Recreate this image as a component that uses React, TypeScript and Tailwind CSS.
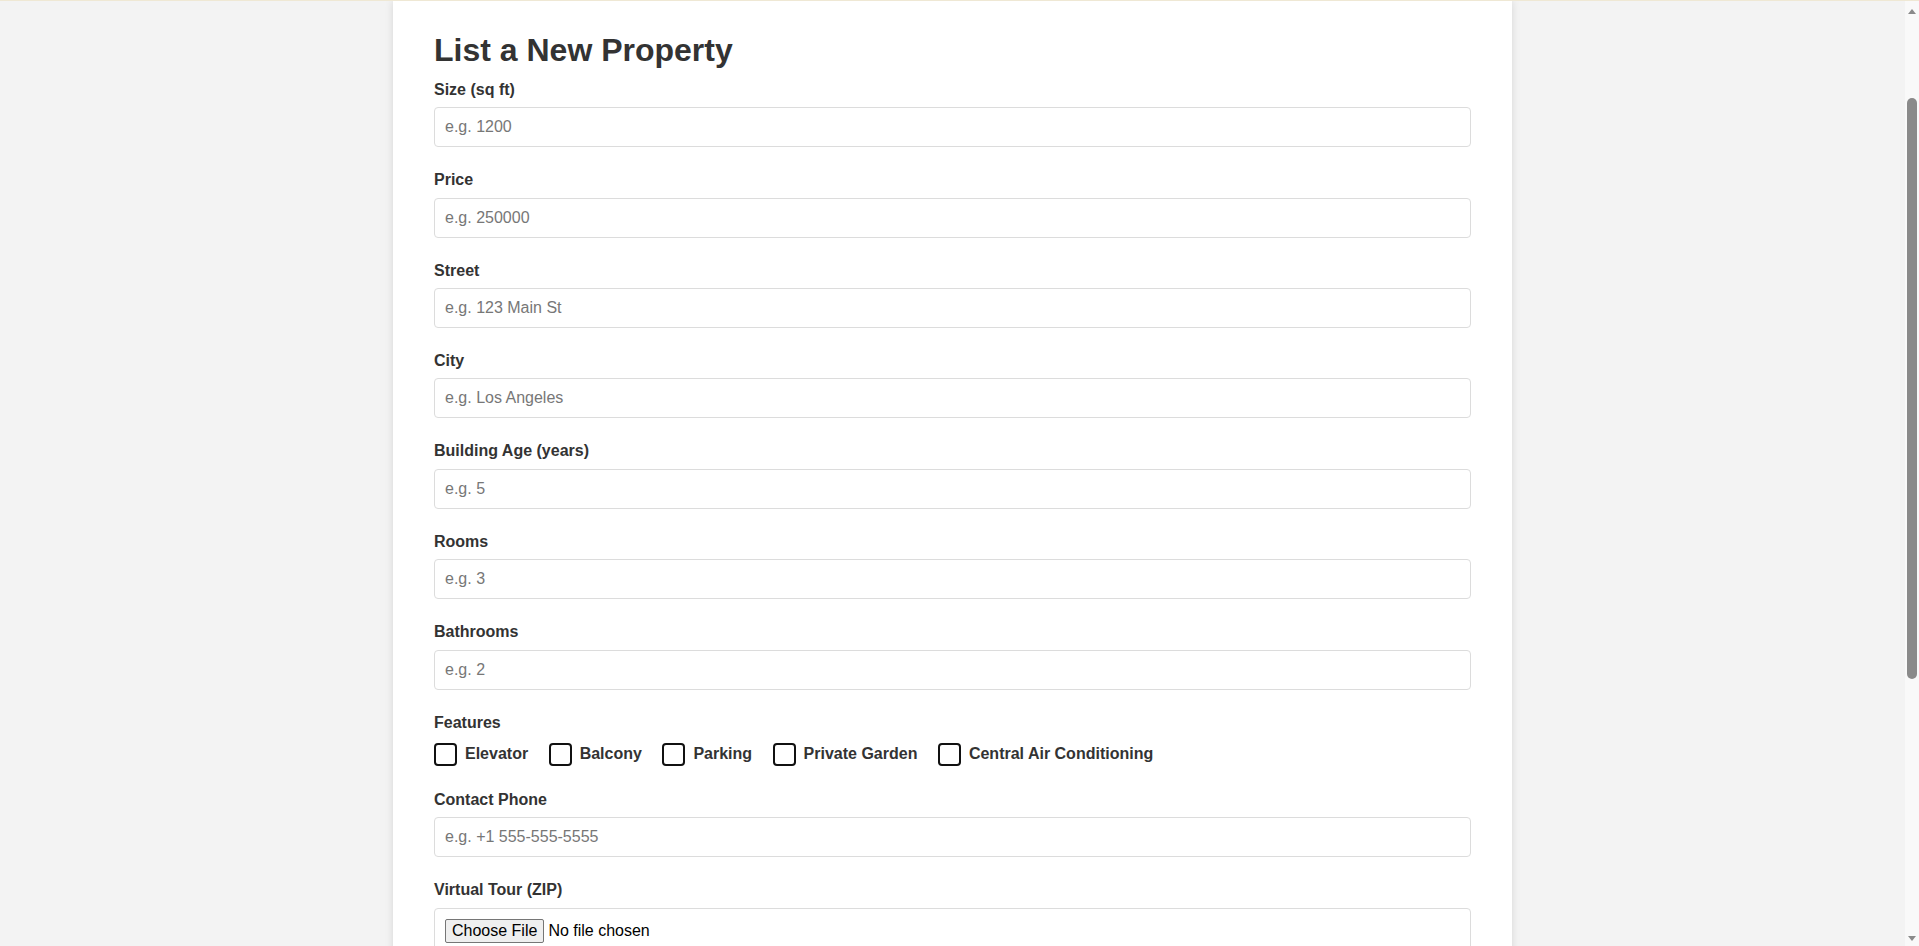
import { useState } from 'react';

const textFields = [
  { name: 'size', label: 'Size (sq ft)', placeholder: 'e.g. 1200' },
  { name: 'price', label: 'Price', placeholder: 'e.g. 250000' },
  { name: 'street', label: 'Street', placeholder: 'e.g. 123 Main St' },
  { name: 'city', label: 'City', placeholder: 'e.g. Los Angeles' },
  { name: 'age', label: 'Building Age (years)', placeholder: 'e.g. 5' },
  { name: 'rooms', label: 'Rooms', placeholder: 'e.g. 3' },
  { name: 'bathrooms', label: 'Bathrooms', placeholder: 'e.g. 2' },
];

const features = ['Elevator', 'Balcony', 'Parking', 'Private Garden', 'Central Air Conditioning'];

const inputClass =
  'block w-full h-[40px] px-[10px] border border-[#dcdcdc] rounded-[4px] bg-white text-[16px] leading-[18.4px] text-[#333] placeholder:text-[#777] outline-none focus:border-[#999]';
const labelClass = 'block mb-2 text-[16px] leading-[18.4px] font-bold text-[#333]';
const fileClass =
  'block w-full p-[10px] border border-[#dcdcdc] rounded-[4px] text-[16px] leading-[18.4px] text-black file:mr-[4px] file:px-[6px] file:py-[2px] file:border file:border-[#767676] file:rounded-[2px] file:bg-[#efefef] file:text-black';

// fake window scrollbar, the page in the shot is scrolled a bit
function Scrollbar() {
  return (
    <div className="w-[14px] shrink-0 h-full bg-[#f9f9f9] flex flex-col items-center">
      <svg width="8" height="5" viewBox="0 0 8 5" className="mt-[8px]">
        <path d="M0 5 L4 0 L8 5 Z" fill="#8a8a8a" />
      </svg>
      <div className="mt-[84px] w-[10px] h-[581px] rounded-[5px] bg-[#8a8a8a]" />
      <svg width="8" height="5" viewBox="0 0 8 5" className="mt-auto mb-[5px]">
        <path d="M0 0 L8 0 L4 5 Z" fill="#8a8a8a" />
      </svg>
    </div>
  );
}

export default function App() {
  const [checked, setChecked] = useState<string[]>([]);

  const toggle = (f: string) =>
    setChecked((prev) => (prev.includes(f) ? prev.filter((x) => x !== f) : [...prev, f]));

  return (
    <div className="flex h-screen overflow-hidden border-t border-[#efe8d4] bg-[#f3f3f3] font-['Liberation_Sans',Arial,sans-serif]">
      <div className="flex-1 min-w-0 h-full overflow-hidden">
        <div className="mx-auto w-[1119px] bg-white px-[41px] pt-[31px] pb-[40px] shadow-[0_0_8px_rgba(0,0,0,0.12)]">
          <h1 className="mb-3 text-[32px] leading-[36.8px] font-bold text-[#333]">List a New Property</h1>

          <form onSubmit={(e) => e.preventDefault()}>
            {textFields.map((f) => (
              <div key={f.name} className="mb-6">
                <label htmlFor={f.name} className={labelClass}>{f.label}</label>
                <input id={f.name} type="text" placeholder={f.placeholder} className={inputClass} />
              </div>
            ))}

            <div className="mb-[23px]">
              <span className={labelClass}>Features</span>
              <div className="flex h-[28px] items-center gap-[20.5px]">
                {features.map((f) => (
                  <label key={f} className="flex items-center gap-2 cursor-pointer">
                    <input
                      type="checkbox"
                      checked={checked.includes(f)}
                      onChange={() => toggle(f)}
                      className="appearance-none w-[23px] h-[23px] border-2 border-[#111] rounded-[4px] bg-white checked:bg-[#333]"
                    />
                    <span className="text-[16px] leading-[18.4px] font-bold text-[#333]">{f}</span>
                  </label>
                ))}
              </div>
            </div>

            <div className="mb-6">
              <label htmlFor="phone" className={labelClass}>Contact Phone</label>
              <input id="phone" type="tel" placeholder="e.g. +1 555-555-5555" className={inputClass} />
            </div>

            <div className="mb-6">
              <label htmlFor="tour" className={labelClass}>Virtual Tour (ZIP)</label>
              <input id="tour" type="file" accept=".zip" className={fileClass} />
            </div>

            <div className="mb-6">
              <label htmlFor="photos" className={labelClass}>Photos</label>
              <input id="photos" type="file" multiple className={fileClass} />
            </div>

            <button type="submit" className="w-full h-[44px] rounded-[4px] bg-[#333] text-white text-[16px] font-bold hover:bg-[#222]">
              Submit Listing
            </button>
          </form>
        </div>
      </div>
      <Scrollbar />
    </div>
  );
}
